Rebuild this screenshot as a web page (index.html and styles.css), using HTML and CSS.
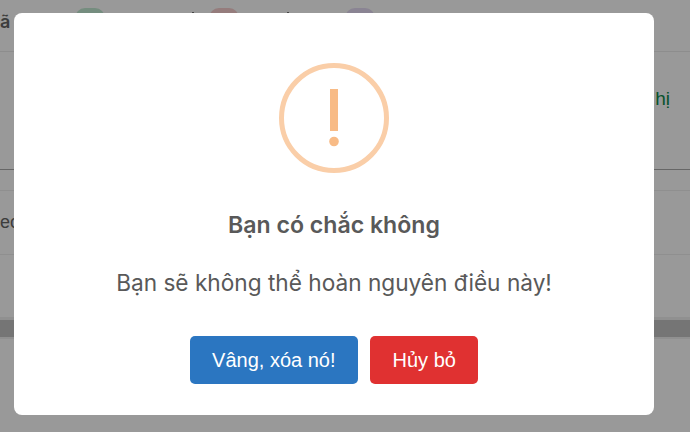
FILE: index.html
```html
<!DOCTYPE html>
<html lang="vi">
<head>
  <meta charset="UTF-8" />
  <title>Xóa</title>
  <link rel="stylesheet" href="styles.css">
</head>
<body>
  <!-- Page behind the dialog -->
  <div class="page">
    <div class="tabs">
      <span class="tab-label">ã</span>
      <span class="pill pill-green"></span>
      <span class="tick tick-first"></span>
      <span class="pill pill-red"></span>
      <span class="tick tick-second"></span>
      <span class="pill pill-purple"></span>
    </div>
    <div class="action-row"><a class="show-link">hị</a></div>
    <div class="table-head"></div>
    <div class="table-row">ec</div>
    <div class="table-row-empty"></div>
    <div class="scrollbar"><div class="scrollbar-thumb"></div></div>
  </div>

  <!-- Dialog -->
  <div class="overlay">
    <div class="dialog">
      <svg class="warn-icon" width="110" height="110" viewBox="0 0 110 110">
        <circle cx="55" cy="55" r="52.5" fill="none" stroke="#facea8" stroke-width="5"/>
        <rect x="51" y="26" width="8" height="42" fill="#f8bb86"/>
        <circle cx="55" cy="78.5" r="4.8" fill="#f8bb86"/>
      </svg>
      <h2 class="dialog-title">Bạn có chắc không</h2>
      <p class="dialog-text">Bạn sẽ không thể hoàn nguyên điều này!</p>
      <div class="dialog-actions">
        <button class="btn btn-confirm">Vâng, xóa nó!</button>
        <button class="btn btn-cancel">Hủy bỏ</button>
      </div>
    </div>
  </div>
</body>
</html>
```
FILE: styles.css
```css
html, body {
  height: 100%;
}

body {
  margin: 0;
  font-family: "Inter", "Liberation Sans", sans-serif;
  background-color: white;
  overflow: hidden;
}

.page {
  height: 432px;
  color: #6b6b6b;
}

.tabs {
  height: 51px;
  display: flex;
  border-bottom: 1px solid #ececec;
}

.tab-label {
  width: 75px;
  margin-top: 11px;
  font-size: 18px;
  line-height: 22px;
  font-weight: 600;
  color: #666;
}

.pill {
  width: 30px;
  height: 30px;
  margin-top: 8px;
  border-radius: 10px;
}

.pill-green {
  background-color: #c4ecd4;
}

.pill-red {
  margin-left: 15px;
  background-color: #f8cfcf;
}

.pill-purple {
  margin-left: 56px;
  background-color: #e6dcf5;
}

.tick {
  width: 2px;
  height: 2px;
  margin-top: 12px;
  background-color: #777;
}

.tick-first {
  margin-left: 87px;
}

.tick-second {
  margin-left: 48px;
}

.action-row {
  height: 118px;
  display: flex;
  justify-content: flex-end;
  padding-right: 20px;
  border-bottom: 1px solid #aaa;
  box-sizing: border-box;
}

.show-link {
  margin-top: 36px;
  font-family: "Liberation Sans", sans-serif;
  font-size: 19px;
  line-height: 22px;
  color: #0d8a4c;
}

.table-head {
  height: 20px;
  border-bottom: 1px solid #eee;
}

.table-row {
  height: 63px;
  line-height: 63px;
  font-family: "Liberation Sans", sans-serif;
  font-size: 18px;
  color: #666;
  border-bottom: 1px solid #eee;
}

.table-row-empty {
  height: 62px;
}

.scrollbar {
  height: 22px;
  padding: 3px 0 2px;
  box-sizing: border-box;
  background-color: #f1f1f1;
}

.scrollbar-thumb {
  height: 17px;
  background-color: #c3c3c3;
}

.overlay {
  position: fixed;
  top: 0;
  left: 0;
  width: 100%;
  height: 100%;
  background-color: rgba(0,0,0,0.4);
  z-index: 999;
}

.dialog {
  width: 640px;
  height: 402px;
  margin: 13px 0 0 14px;
  padding-top: 50px;
  box-sizing: border-box;
  background: white;
  border-radius: 8px;
  display: flex;
  flex-direction: column;
  align-items: center;
}

.warn-icon {
  flex-shrink: 0;
}

.dialog-title {
  margin: 37px 0 0;
  font-size: 23.1px;
  line-height: 30px;
  font-weight: 600;
  color: #595959;
}

.dialog-text {
  margin: 28px 0 0;
  font-size: 22.65px;
  line-height: 30px;
  font-weight: 400;
  color: #595959;
}

.dialog-actions {
  display: flex;
  gap: 12px;
  margin-top: 38px;
}

.btn {
  height: 48px;
  padding: 0 22.5px;
  border: none;
  border-radius: 5px;
  color: white;
  font-family: "Liberation Sans", sans-serif;
  font-size: 20px;
  cursor: pointer;
}

.btn-confirm {
  background-color: #2b76c1;
}

.btn-cancel {
  background-color: #e03131;
}
```
